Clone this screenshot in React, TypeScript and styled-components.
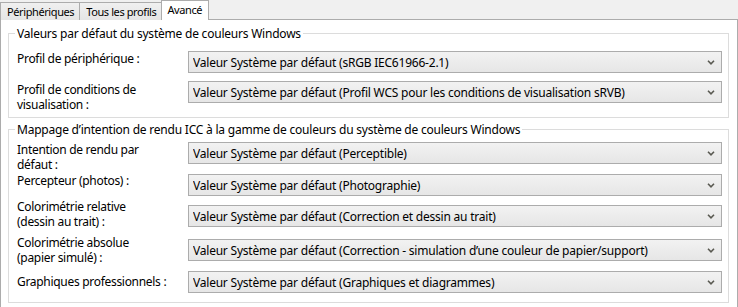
import React from "react";
import styled, { createGlobalStyle } from "styled-components";

const GlobalStyle = createGlobalStyle`
  html, body {
    margin: 0;
    padding: 0;
    background: #f0f0f0;
    overflow: hidden;
  }
  body {
    font-family: "Segoe UI", "Noto Sans", sans-serif;
    font-size: 12px;
    letter-spacing: -0.22px;
    color: #000;
  }
`;

const Window = styled.div`
  width: 738px;
  height: 307px;
  display: flex;
  flex-direction: column;
  background: #f0f0f0;
`;

const TabStrip = styled.div`
  display: flex;
  align-items: flex-end;
  height: 20px;
`;

type TabProps = {
  active?: boolean;
};

const Tab = styled.div<TabProps>`
  box-sizing: border-box;
  height: ${(props) => (props.active ? "20px" : "18px")};
  line-height: ${(props) => (props.active ? "18px" : "17px")};
  padding: 0 ${(props) => (props.active ? "6px 0 5px" : "5px 0 6px")};
  margin-right: -1px;
  border: 1px solid #acacac;
  border-bottom: none;
  background: ${(props) =>
    props.active ? "#fff" : "linear-gradient(#f0f0f0, #e5e5e5)"};
  position: relative;
  z-index: ${(props) => (props.active ? 1 : 0)};
  font-size: 11px;
  letter-spacing: -0.4px;
  white-space: nowrap;
`;

const Panel = styled.div`
  flex: 1;
  margin-top: -1px;
  padding: 0 8px 0 7px;
  background: #fff;
  border: 1px solid #acacac;
  border-bottom: none;
  display: flex;
  flex-direction: column;
`;

type GroupProps = {
  top: number;
  bottom: number;
};

const GroupBox = styled.fieldset<GroupProps>`
  margin: ${(props) => props.top}px 0 0 0;
  padding: 0 6px ${(props) => props.bottom}px 8px;
  border: 1px solid #dcdcdc;
  min-width: 0;
`;

const Legend = styled.legend`
  margin-left: -2px;
  padding: 0 2px;
  line-height: 15px;
`;

type RowProps = {
  gap: number;
};

const Row = styled.div<RowProps>`
  display: flex;
  height: 22px;
  margin-top: ${(props) => props.gap}px;
`;

type LabelProps = {
  shift: number;
};

const Label = styled.div<LabelProps>`
  flex: none;
  width: 171px;
  margin-top: ${(props) => props.shift}px;
  line-height: 15px;
  white-space: pre-line;
  letter-spacing: -0.3px;
`;

const Combo = styled.div`
  flex: 1;
  box-sizing: border-box;
  height: 22px;
  display: flex;
  align-items: center;
  padding: 0 6px 0 4px;
  border: 1px solid #acacac;
  background: linear-gradient(#f2f2f2, #e6e6e6);
`;

const ComboText = styled.span`
  flex: 1;
  white-space: nowrap;
  overflow: hidden;
`;

const Chevron = () => (
  <svg width="8" height="5" viewBox="0 0 8 5">
    <path d="M1 0.8 L4 3.8 L7 0.8" stroke="#5a5a52" strokeWidth="1.6" fill="none" />
  </svg>
);

type Setting = {
  label: string;
  value: string;
  gap: number;
  shift: number;
};

const defaults: Setting[] = [
  {
    label: "Profil de périphérique :",
    value: "Valeur Système par défaut (sRGB IEC61966-2.1)",
    gap: 10,
    shift: 0,
  },
  {
    label: "Profil de conditions de\nvisualisation :",
    value:
      "Valeur Système par défaut (Profil WCS pour les conditions de visualisation sRVB)",
    gap: 8,
    shift: 1,
  },
];

const intents: Setting[] = [
  {
    label: "Intention de rendu par\ndéfaut :",
    value: "Valeur Système par défaut (Perceptible)",
    gap: 5,
    shift: 0,
  },
  {
    label: "Percepteur (photos) :",
    value: "Valeur Système par défaut (Photographie)",
    gap: 10,
    shift: -1,
  },
  {
    label: "Colorimétrie relative\n(dessin au trait) :",
    value: "Valeur Système par défaut (Correction et dessin au trait)",
    gap: 9,
    shift: -6,
  },
  {
    label: "Colorimétrie absolue\n(papier simulé) :",
    value:
      "Valeur Système par défaut (Correction - simulation d’une couleur de papier/support)",
    gap: 12,
    shift: -4,
  },
  {
    label: "Graphiques professionnels :",
    value: "Valeur Système par défaut (Graphiques et diagrammes)",
    gap: 10,
    shift: 3,
  },
];

const SettingRow = ({ setting }: { setting: Setting }) => (
  <Row gap={setting.gap}>
    <Label shift={setting.shift}>{setting.label}</Label>
    <Combo>
      <ComboText>{setting.value}</ComboText>
      <Chevron />
    </Combo>
  </Row>
);

export default function App() {
  return (
    <Window>
      <GlobalStyle />
      <TabStrip>
        <Tab>Périphériques</Tab>
        <Tab>Tous les profils</Tab>
        <Tab active>Avancé</Tab>
      </TabStrip>
      <Panel>
        <GroupBox top={6} bottom={14}>
          <Legend>Valeurs par défaut du système de couleurs Windows</Legend>
          {defaults.map((s) => (
            <SettingRow key={s.label} setting={s} />
          ))}
        </GroupBox>
        <GroupBox top={4} bottom={9}>
          <Legend>
            Mappage d’intention de rendu ICC à la gamme de couleurs du système
            de couleurs Windows
          </Legend>
          {intents.map((s) => (
            <SettingRow key={s.label} setting={s} />
          ))}
        </GroupBox>
      </Panel>
    </Window>
  );
}
